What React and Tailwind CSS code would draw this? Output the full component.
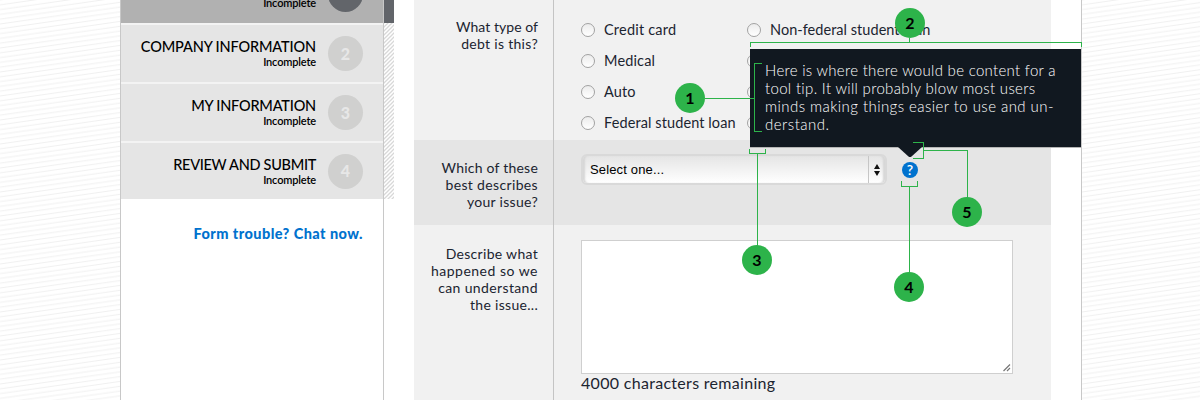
import React from "react";

const STEPS = [
  { n: "2", title: "COMPANY INFORMATION", ls: "tracking-[-0.14px]", h: "h-[59px]" },
  { n: "3", title: "MY INFORMATION", ls: "tracking-[-0.2px]", h: "h-[59px]" },
  { n: "4", title: "REVIEW AND SUBMIT", ls: "tracking-[-0.3px]", h: "h-[58px]" },
];

function Lines({ id }) {
  return (
    <svg className="h-[400px] w-full" aria-hidden="true">
      <defs>
        <pattern id={id} width="34" height="4.8" patternUnits="userSpaceOnUse">
          <path d="M-34 9.6 L68 -4.8 M-34 4.8 L34 -4.8 M0 9.6 L68 0" stroke="#f0f0f0" strokeWidth="1" />
        </pattern>
      </defs>
      <rect width="100%" height="400" fill={`url(#${id})`} />
    </svg>
  );
}

function Hatch() {
  return (
    <svg className="block h-44 w-2.5" aria-hidden="true">
      <defs>
        <pattern id="hatch" width="4" height="4" patternUnits="userSpaceOnUse">
          <path d="M-1 1 L1 -1 M-1 5 L5 -1 M3 5 L5 3" stroke="#d8d8d8" strokeWidth="1.3" />
        </pattern>
      </defs>
      <rect width="10" height="176" fill="url(#hatch)" />
    </svg>
  );
}

function Radio({ label, ls = "tracking-[0.25px]" }) {
  return (
    <div className="flex h-[31px] items-center">
      <span className="h-[14px] w-[14px] shrink-0 rounded-full border border-[#a2a2a2] bg-linear-to-b from-[#ececec] to-white" />
      {label && <span className={`ml-[9px] whitespace-nowrap text-[14.5px] leading-5 ${ls}`}>{label}</span>}
    </div>
  );
}

function Marker({ n, place }) {
  return (
    <div className={`absolute flex h-[30px] w-[30px] items-center justify-center rounded-full bg-[#2db34a] text-[16px] font-bold text-black ${place}`}>
      {n}
    </div>
  );
}

function Label({ lines, pad }) {
  return (
    <div className={`w-[140px] shrink-0 border-r border-[#c4c4c4] pr-[15px] text-right text-[14px] leading-[17px] ${pad}`}>
      {lines.map(([t, ls]) => (
        <div key={t} className={`whitespace-nowrap ${ls}`}>{t}</div>
      ))}
    </div>
  );
}

export default function App() {
  return (
    <div className="relative flex h-[400px] w-[1200px] overflow-hidden bg-white font-['Lato','Liberation_Sans',sans-serif] text-[#1b2430]">
      <div className="w-[120px] shrink-0"><Lines id="left-lines" /></div>

      <aside className="w-[264px] shrink-0 border-x border-[#c8c8c8] text-black">
        <div className="flex h-[23px] bg-[#b1b1b1]">
          <div className="w-[195px] text-right text-[11px] font-semibold leading-[14px] tracking-[-0.15px]"><span className="relative top-[-4px]">Incomplete</span></div>
          <div className="ml-3 h-3 w-[35px] overflow-hidden">
            <div className="mt-[-23px] h-[35px] rounded-full bg-[#62656a]" />
          </div>
        </div>
        {STEPS.map((s) => (
          <div key={s.n} className={`flex items-center border-t-2 border-[#f3f3f3] bg-[#e5e5e5] ${s.h}`}>
            <div className="w-[195px] text-right">
              <div className={`whitespace-nowrap text-[14.5px] font-medium leading-[17px] ${s.ls}`}>{s.title}</div>
              <div className="text-[11px] font-semibold leading-[14px] tracking-[-0.15px]">Incomplete</div>
            </div>
            <div className="ml-3 flex h-[35px] w-[35px] items-center justify-center rounded-full bg-[#d0d0cf] text-[16px] font-black text-[#e7e7e7]">{s.n}</div>
          </div>
        ))}
        <div className="mt-[25px] whitespace-nowrap pr-[20px] text-right text-[14.5px] font-black leading-5 tracking-[0.44px] text-[#0072ce]">Form trouble? Chat now.</div>
      </aside>

      <div className="w-2.5 shrink-0">
        <div className="h-[23px] bg-[#62656a]" />
        <Hatch />
      </div>

      <main className="ml-5 flex w-[637px] shrink-0 flex-col bg-[#f1f1f1]">
        <section className="flex h-[140px]">
          <Label pad="pt-[18px]" lines={[["What type of", "tracking-[0.05px]"], ["debt is this?", "tracking-[0.3px]"]]} />
          <div className="ml-[27px] grid grid-cols-[166px_200px] content-start pt-[14px]">
            <Radio label="Credit card" ls="tracking-[0.2px]" />
            <Radio label="Non-federal student loan" ls="tracking-[0.04px]" />
            <Radio label="Medical" ls="tracking-[0.15px]" />
            <Radio />
            <Radio label="Auto" ls="tracking-[0.1px]" />
            <Radio />
            <Radio label="Federal student loan" ls="tracking-[0.1px]" />
            <Radio />
          </div>
        </section>
        <section className="flex h-[85px] bg-[#e5e5e5]">
          <Label pad="pt-[19px]" lines={[["Which of these", "tracking-[0.22px]"], ["best describes", "tracking-[0.35px]"], ["your issue?", "tracking-[0.3px]"]]} />
          <div className="ml-[27px] mt-[14px] flex h-[31px] w-[306px] rounded-md border-2 border-[#d9d9d9] bg-linear-to-b from-[#e5e5e5] to-white shadow-[inset_3px_0_2px_-1px_#d6d6d6,inset_-3px_0_2px_-1px_#d6d6d6]">
            <span className="flex-1 pl-[7px] font-['Liberation_Sans',sans-serif] text-[13px] leading-[27px] tracking-[0.15px] text-black">Select one...</span>
            <span className="flex w-[17px] items-center justify-center border-l border-[#c6c6c6]">
              <svg width="6" height="12" viewBox="0 0 6 12"><path d="M3 0 6 5H0ZM0 7H6L3 12Z" fill="#111" /></svg>
            </span>
          </div>
          <div className="ml-[15px] mt-[22px] flex h-4 w-4 items-center justify-center rounded-full bg-[#0072ce] text-[14px] font-semibold leading-4 text-white">?</div>
        </section>
        <section className="flex h-[175px]">
          <Label pad="pt-[20px]" lines={[["Describe what", "tracking-[0.3px]"], ["happened so we", "tracking-[0.5px]"], ["can understand", "tracking-[0.37px]"], ["the issue...", "tracking-[0.3px]"]]} />
          <div className="ml-[27px] mt-[15px]">
            <div className="flex h-[134px] w-[432px] items-end justify-end border border-[#cfcfcf] bg-white p-px">
              <svg width="8" height="8" viewBox="0 0 8 8"><path d="M0.5 7 7 0.5M4 7 7 4" stroke="#777" strokeWidth="1.2" /></svg>
            </div>
            <div className="-mt-px text-[16px] leading-5 tracking-[0.3px]">4000 characters remaining</div>
          </div>
        </section>
      </main>

      <div className="ml-[30px] w-[119px] shrink-0 border-l border-[#c8c8c8]"><Lines id="right-lines" /></div>

      <div className="absolute left-[750px] top-[49px] h-[98px] w-[331px] bg-[#111820] pl-[15px] pt-[12px] text-[15px] font-light leading-[18px] text-white shadow-[0_1px_0_#b5b5b5]">
        <div className="whitespace-nowrap tracking-[0.3px]">Here is where there would be content for a</div>
        <div className="whitespace-nowrap tracking-[0.33px]">tool tip. It will probably blow most users</div>
        <div className="whitespace-nowrap tracking-[0.44px]">minds making things easier to use and un-</div>
        <div className="whitespace-nowrap tracking-[0.5px]">derstand.</div>
      </div>

      <svg className="absolute left-0 top-0 h-[400px] w-[1200px]" viewBox="0 0 1200 400" aria-hidden="true">
        <path d="M898 147H922L911.5 156.5Q910 157.5 908.5 156.5Z" fill="#111820" />
        <g fill="none" stroke="#2db34a" shapeRendering="crispEdges">
          <path d="M705 98.500H754M762 63.500H754.500V131.500H762" />
          <path d="M909.500 38V42.500M750.500 47V42.500H1081.500V47" />
          <path d="M749.500 149V153.500H765.500V149M757.500 153V246" />
          <path d="M901.500 181V186.500H917.500V181M909.500 186V273" />
          <path d="M913 142.500H923.500V158.500H913M924 150.500H967.500V198" />
        </g>
      </svg>

      <Marker n="1" place="left-[675px] top-[83px]" />
      <Marker n="2" place="left-[895px] top-[8px]" />
      <Marker n="3" place="left-[742px] top-[245px]" />
      <Marker n="4" place="left-[894px] top-[272px]" />
      <Marker n="5" place="left-[952px] top-[197px]" />
    </div>
  );
}
